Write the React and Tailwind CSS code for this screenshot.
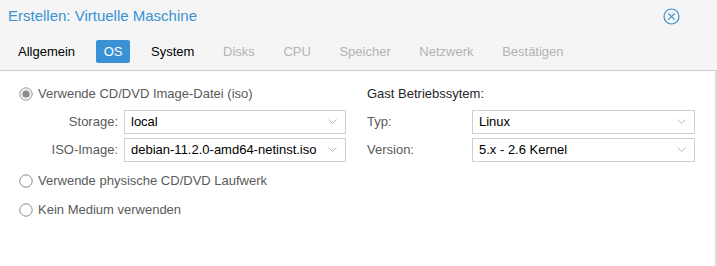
import React from 'react';

const Chevron = () => (
  <svg width="9" height="6" viewBox="0 0 9 6" className="shrink-0">
    <path d="M0.5 0.5 L4.5 4.5 L8.5 0.5" fill="none" stroke="#b8b8b8" strokeWidth="1" />
  </svg>
);

const Combo = ({ value, className = '' }) => (
  <div className={`flex items-center justify-between h-[24px] border border-[#cfcfcf] bg-white pl-[6px] pr-[8px] text-[#000] ${className}`}>
    <span>{value}</span>
    <Chevron />
  </div>
);

const Radio = ({ checked, label }) => (
  <label className="flex items-center gap-[5px] h-[16px] text-[#5a5a5a]">
    {checked ? (
      <svg width="14" height="14" viewBox="0 0 14 14">
        <circle cx="7" cy="7" r="6.2" fill="#f0f0f0" stroke="#9a9a9a" strokeWidth="1" />
        <circle cx="7" cy="7" r="3.6" fill="#8c8c8c" />
      </svg>
    ) : (
      <svg width="14" height="14" viewBox="0 0 14 14">
        <circle cx="7" cy="7" r="6.2" fill="#fff" stroke="#8a8a8a" strokeWidth="1" />
      </svg>
    )}
    <span>{label}</span>
  </label>
);

const tabs = [
  { name: 'Allgemein', state: 'done' },
  { name: 'OS', state: 'active' },
  { name: 'System', state: 'done' },
  { name: 'Disks', state: 'off' },
  { name: 'CPU', state: 'off' },
  { name: 'Speicher', state: 'off' },
  { name: 'Netzwerk', state: 'off' },
  { name: 'Bestätigen', state: 'off' },
];

export default function App() {
  return (
    <div className="w-[717px] h-[266px] bg-white text-[13px] font-['Liberation_Sans',Arial,sans-serif] overflow-hidden">
      {/* Header */}
      <div className="bg-[#f5f5f5] border-b border-[#cfcfcf] h-[71px]">
        <div className="flex items-center justify-between h-[33px] pl-[8px] pr-[37px]">
          <span className="text-[15px] text-[#3892d4]">Erstellen: Virtuelle Maschine</span>
          <svg width="17" height="17" viewBox="0 0 17 17">
            <circle cx="8.5" cy="8.5" r="7.5" fill="none" stroke="#3892d4" strokeWidth="1.2" />
            <path d="M5.3 5.3 L11.7 11.7 M11.7 5.3 L5.3 11.7" stroke="#3892d4" strokeWidth="1.2" />
          </svg>
        </div>
        <div className="flex items-center gap-[12.6px] pl-[10px] mt-[7px]">
          {tabs.map((t) => (
            <div
              key={t.name}
              className={`h-[23px] px-[8px] flex items-center rounded-[2px] ${
                t.state === 'active'
                  ? 'bg-[#3892d4] text-white'
                  : t.state === 'done'
                  ? 'text-[#000]'
                  : 'text-[#b3b3b3]'
              }`}
            >
              {t.name}
            </div>
          ))}
        </div>
      </div>

      {/* Body */}
      <div className="flex h-[195px] border-r-2 border-[#dcdcdc]">
        <div className="w-[346px] pl-[19px] pt-[15px]">
          <Radio checked label="Verwende CD/DVD Image-Datei (iso)" />
          <div className="mt-[8px] flex flex-col gap-[4px]">
            <div className="flex items-center">
              <span className="w-[105px] text-right pr-[6px] text-[#5a5a5a]">Storage:</span>
              <Combo value="local" className="w-[222px]" />
            </div>
            <div className="flex items-center">
              <span className="w-[105px] text-right pr-[6px] text-[#5a5a5a]">ISO-Image:</span>
              <Combo value="debian-11.2.0-amd64-netinst.iso" className="w-[222px]" />
            </div>
          </div>
          <div className="mt-[11px] flex flex-col gap-[13px]">
            <Radio label="Verwende physische CD/DVD Laufwerk" />
            <Radio label="Kein Medium verwenden" />
          </div>
        </div>
        <div className="flex-1 pl-[21px] pt-[15px]">
          <div className="h-[16px] flex items-center text-[#262626]">Gast Betriebssytem:</div>
          <div className="mt-[8px] flex flex-col gap-[4px]">
            <div className="flex items-center">
              <span className="w-[105px] text-[#5a5a5a]">Typ:</span>
              <Combo value="Linux" className="w-[223px]" />
            </div>
            <div className="flex items-center">
              <span className="w-[105px] text-[#5a5a5a]">Version:</span>
              <Combo value="5.x - 2.6 Kernel" className="w-[223px]" />
            </div>
          </div>
        </div>
      </div>
    </div>
  );
}
